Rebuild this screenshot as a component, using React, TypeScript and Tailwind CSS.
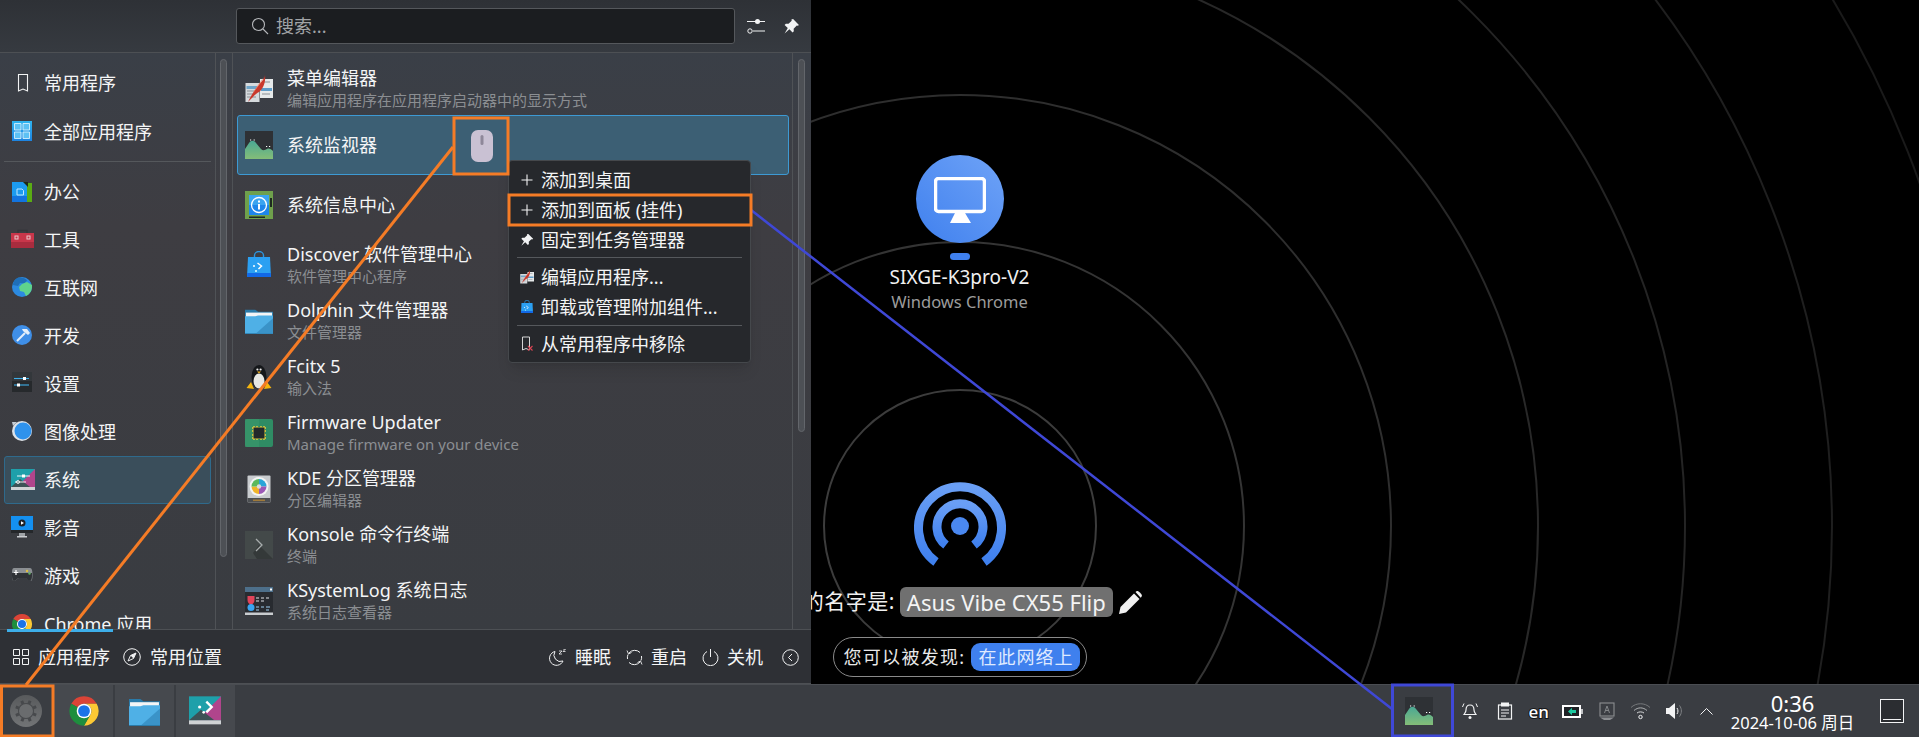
import React from "react";

type P = { s?: number };

function Chrome({ s = 24 }: P) {
  return (
    <svg width={s} height={s} viewBox="0 0 48 48">
      <path fill="#db4437" d="M24 2A22 22 0 0 1 43.05 13H24A11 11 0 0 0 14.47 18.5L4.95 13A22 22 0 0 1 24 2Z" />
      <path fill="#fcc934" d="M43.05 13A22 22 0 0 1 24 46L33.53 29.5A11 11 0 0 0 24 13Z" />
      <path fill="#1e8e3e" d="M24 46A22 22 0 0 1 4.95 13L14.47 18.5L14 29.5L24 35Z" />
      <path fill="#1e8e3e" d="M24 46L33.53 29.5L24 30Z" />
      <circle cx="24" cy="24" r="11" fill="#fff" />
      <circle cx="24" cy="24" r="8.8" fill="#1a73e8" />
    </svg>
  );
}

function Folder({ s = 28 }: P) {
  return (
    <svg width={s} height={s} viewBox="0 0 30 30">
      <path fill="#2a7aa8" d="M0 3h11l3 2h16v24H0Z" />
      <rect x="1" y="6" width="28" height="5" fill="#f4f5f6" />
      <path fill="#4fb0e6" d="M0 10h11l3-1 16 0v19H0Z" />
      <path fill="#3a93c8" d="M12 28L30 12v16Z" />
    </svg>
  );
}

function SysMon({ s = 28 }: P) {
  return (
    <svg width={s} height={s} viewBox="0 0 28 28">
      <defs>
        <linearGradient id="smg" x1="0" y1="0" x2="0" y2="1">
          <stop offset="0" stopColor="#4aa894" />
          <stop offset="1" stopColor="#84bd78" />
        </linearGradient>
      </defs>
      <rect width="28" height="28" fill="#2e3135" />
      <path fill="url(#smg)" d="M0 18L4 12C6 9 9 9 11 12L16 18C18 20 20 19 22 18C24 17 26 18 28 20V28H0Z" />
      <path fill="#fff" d="M5 8.5h1.2v1H5ZM8.6 8.5h1.2v1H8.6ZM21 15h1.2v1H21ZM24 15h1.2v1H24Z" />
    </svg>
  );
}

function MenuEdit({ s = 28 }: P) {
  return (
    <svg width={s} height={s} viewBox="0 0 28 28">
      <rect x="0.5" y="8" width="14" height="19" fill="#d6dadd" />
      <rect x="15" y="4" width="13" height="19" fill="#e6e9ea" />
      <rect x="1.5" y="11" width="12" height="3" fill="#6fa5c9" />
      <rect x="16" y="13" width="11" height="3" fill="#5e9cc9" />
      <path d="M2 16h10M2 19h7M2 22h9M17 7h8M17 19h8" stroke="#8a8f94" strokeWidth="1" />
      <path fill="#c9382c" d="M20 0C20 4 15 8 12 12C9 16 6 21 3 27C8 22 10 19 14 17C18 14 21 7 20 0Z" />
      <path fill="#ef8a70" d="M19 2C16 6 12 11 8 18C12 13 16 8 19 2Z" />
    </svg>
  );
}

function Info({ s = 28 }: P) {
  return (
    <svg width={s} height={s} viewBox="0 0 28 28">
      <rect width="28" height="28" fill="#6fa04c" />
      <rect x="4" y="4" width="20" height="20" fill="#1e86ea" />
      <path d="M4 4h20v10H4Z" fill="#3aa4f0" />
      <path d="M25 7h2v9h-2ZM4 25.5h16v1.5H4Z" fill="#1e2a20" />
      <circle cx="14" cy="14" r="7.5" fill="none" stroke="#fff" strokeWidth="1.3" />
      <rect x="13" y="13" width="2" height="5.5" fill="#fff" />
      <rect x="13" y="9.5" width="2" height="2" fill="#fff" />
    </svg>
  );
}

function Bag({ s = 28 }: P) {
  return (
    <svg width={s} height={s} viewBox="0 0 28 28">
      <path d="M9.5 7V4.5a4.5 4 0 0 1 9 0V7" fill="none" stroke="#2b95e0" strokeWidth="1.4" />
      <path fill="#2ba0f2" d="M3 6h22l1 20H2Z" />
      <path fill="#1268e6" d="M2.2 22h23.6l.2 4H2Z" />
      <path d="M12.5 12l4 3-3 3" fill="none" stroke="#fff" strokeWidth="1.5" />
      <circle cx="9" cy="15" r="1" fill="#fff" />
      <circle cx="11" cy="20" r="1" fill="#dff" />
    </svg>
  );
}

function Penguin({ s = 28 }: P) {
  return (
    <svg width={s} height={s} viewBox="0 0 28 28">
      <ellipse cx="14" cy="14" rx="7.5" ry="12" fill="#15171a" />
      <ellipse cx="14" cy="18" rx="5.5" ry="7.5" fill="#e8e8e4" />
      <circle cx="12.4" cy="6.5" r="1.1" fill="#eee" />
      <circle cx="15.6" cy="6.5" r="1.1" fill="#eee" />
      <path d="M12 8.5h4l-2 2Z" fill="#f0b020" />
      <path d="M1.5 25L6 19l3 7ZM26.5 25L22 19l-3 7Z" fill="#f5b50f" />
    </svg>
  );
}

function Firmware({ s = 28 }: P) {
  return (
    <svg width={s} height={s} viewBox="0 0 28 28">
      <rect width="28" height="28" rx="2" fill="#2f8c64" />
      <path d="M0 0h14v28H0Z" fill="#3e9a6e" opacity="0.5" />
      <path d="M7 9h14M7 12h14M7 16h14M7 19h14M9 7v14M12 7v14M16 7v14M19 7v14" stroke="#f2d13a" strokeWidth="1.4" />
      <rect x="8.5" y="8.5" width="11" height="11" fill="#23282b" />
    </svg>
  );
}

function Disk({ s = 28 }: P) {
  return (
    <svg width={s} height={s} viewBox="0 0 28 28">
      <rect x="2.5" y="0.5" width="23" height="27" rx="1" fill="#c9cccf" />
      <rect x="2.5" y="23" width="23" height="4.5" fill="#4c4f52" />
      <rect x="8" y="24.5" width="12" height="1.6" fill="#a07a3a" />
      <circle cx="14" cy="11.5" r="9.5" fill="#f4f4f4" />
      <path d="M14 11.5V4a7.5 7.5 0 0 1 7.5 7.5Z" fill="#2aa5d8" />
      <path d="M14 11.5h7.5A7.5 7.5 0 0 1 14 19Z" fill="#9b59b6" />
      <path d="M14 11.5V19a7.5 7.5 0 0 1-7.5-7.5Z" fill="#f0b429" />
      <path d="M14 11.5H6.5A7.5 7.5 0 0 1 14 4Z" fill="#5cb85c" />
      <circle cx="14" cy="11.5" r="2.2" fill="#ddd" />
    </svg>
  );
}

function Konsole({ s = 28 }: P) {
  return (
    <svg width={s} height={s} viewBox="0 0 28 28">
      <rect width="28" height="28" fill="#434949" />
      <path d="M14 14L28 28H12L8 22Z" fill="#343939" />
      <path d="M11 8l6 6-6 6" fill="none" stroke="#a8adad" strokeWidth="1.3" />
    </svg>
  );
}

function SysLog({ s = 28 }: P) {
  return (
    <svg width={s} height={s} viewBox="0 0 28 28">
      <rect width="28" height="28" fill="#282b30" />
      <rect width="28" height="5" fill="#4d6f8a" />
      <rect x="25" y="1.5" width="2" height="2" fill="#fff" />
      <rect y="25.5" width="28" height="2.5" fill="#c9cccf" />
      <path d="M2.5 9h7v4c0 3-2 4-3.500 5C4.500 17 2.500 16 2.500 13Z" fill="#e0445a" />
      <circle cx="6" cy="20.500" r="3.500" fill="#3aa4f0" />
      <path d="M11 11h3M16 11h3M21 11h3M11 14h3M16 14h3" stroke="#e0e4e8" strokeWidth="1" />
      <path d="M11 20h3M16 20h3M21 20h4M11 23h3M21 23h3" stroke="#9fd0f0" strokeWidth="1" />
    </svg>
  );
}

function Bookmark() {
  return (
    <svg width="24" height="24" viewBox="0 0 24 24">
      <path d="M7.500 3.500h9v16.500l-4.500-2-4.500 2Z" fill="none" stroke="#f2f3f4" strokeWidth="1.100" />
    </svg>
  );
}

function AllApps() {
  return (
    <svg width="24" height="24" viewBox="0 0 24 24">
      <defs>
        <linearGradient id="aa" x1="0" y1="0" x2="0" y2="1">
          <stop offset="0" stopColor="#2fb4f0" />
          <stop offset="1" stopColor="#1d83e0" />
        </linearGradient>
      </defs>
      <rect x="1" y="1" width="20" height="20" fill="url(#aa)" />
      <path d="M3.500 3.500h6.500v6.500H3.500ZM12 3.500h6.500v6.500H12ZM3.500 12h6.500v6.500H3.500ZM12 12h6.500v6.500H12Z" fill="#5cc1f4" stroke="#e6f6ff" strokeWidth="0.800" />
    </svg>
  );
}

function Office() {
  return (
    <svg width="24" height="24" viewBox="0 0 24 24">
      <rect x="1" y="2" width="15" height="20" fill="#1c9bf0" />
      <path d="M1 16h15v6H1Z" fill="#1374e0" />
      <path d="M16 3h5v19h-5Z" fill="#5aac14" />
      <path d="M12 2h5v5Z" fill="#1f2a14" />
      <path d="M6 9h5l1.500 1.500V15H6Z" fill="none" stroke="#bfe6ff" strokeWidth="1" />
    </svg>
  );
}

function Tools() {
  return (
    <svg width="24" height="24" viewBox="0 0 24 24" className="overflow-visible">
      <path d="M7 5V2.500h9V5" fill="none" stroke="#33363a" strokeWidth="1.500" />
      <rect x="0" y="5" width="23" height="15" fill="#c8364a" />
      <rect x="0" y="14" width="23" height="6" fill="#a82c3e" />
      <rect x="4" y="8" width="3" height="3" fill="none" stroke="#e8c8cc" strokeWidth="1" />
      <rect x="16" y="8" width="3" height="3" fill="none" stroke="#e8c8cc" strokeWidth="1" />
    </svg>
  );
}

function Globe() {
  return (
    <svg width="24" height="24" viewBox="0 0 24 24">
      <circle cx="11" cy="11" r="10" fill="#2c8ae0" />
      <path d="M8 1.500c4 0 7 1 8 3l-3 3-4-.5-2 3-5-1C2 5 5 2 8 1.500Z" fill="#1f6fb8" />
      <path d="M11 8l5-2 5 3c.5 5-2 9-6 11l-2-4-4-1-1-4Z" fill="#5fd38c" />
    </svg>
  );
}

function Dev() {
  return (
    <svg width="24" height="24" viewBox="0 0 24 24">
      <circle cx="11" cy="11" r="10" fill="#3f8fe8" />
      <path d="M6 17l8-8" stroke="#e4effa" strokeWidth="2" />
      <path d="M11 5h5l3 4-2 2-5-4Z" fill="#e4effa" />
    </svg>
  );
}

function Settings() {
  return (
    <svg width="24" height="24" viewBox="0 0 24 24">
      <rect x="1" y="0" width="20" height="20" fill="#26292c" />
      <path d="M1 0h20v9H1Z" fill="#33373b" />
      <path d="M3 6.500h15" stroke="#3fb0ea" strokeWidth="1.100" />
      <path d="M3 13h15" stroke="#3fb0ea" strokeWidth="1.100" />
      <rect x="12" y="5" width="3" height="3" fill="#fff" />
      <rect x="6" y="11.500" width="3" height="3" fill="#fff" />
    </svg>
  );
}

function Gfx() {
  return (
    <svg width="24" height="24" viewBox="0 0 24 24">
      <circle cx="11" cy="11" r="10" fill="#dde2e8" />
      <circle cx="12" cy="11" r="8.500" fill="#2f92ec" />
      <path d="M1 2h5L2 6Z" fill="#c4ccd4" />
    </svg>
  );
}

function SysIcon({ s = 24, slider = true }: P & { slider?: boolean }) {
  return (
    <svg width={s} height={s} viewBox="0 0 24 24">
      <rect x="0" y="1" width="24" height="18" fill="#1ea0aa" />
      <path d="M24 1v18H6Z" fill="#b0458c" />
      <path d="M0 19L9 11l10 8Z" fill="#3d5256" />
      <rect y="19" width="24" height="3" fill="#cfd2d4" />
      {slider ? (
        <g>
          <path d="M6 8h13M4 14h11" stroke="#fff" strokeWidth="0.900" />
          <rect x="11" y="6.500" width="3" height="3" fill="#fff" />
          <circle cx="7" cy="14" r="1.500" fill="none" stroke="#fff" strokeWidth="0.800" />
        </g>
      ) : (
        <g>
          <path d="M13 5l4 4-4 4" fill="none" stroke="#fff" strokeWidth="1.800" />
          <circle cx="8" cy="9" r="1.200" fill="#fff" />
          <circle cx="11" cy="13" r="1" fill="#fff" />
        </g>
      )}
    </svg>
  );
}

function Media() {
  return (
    <svg width="24" height="24" viewBox="0 0 24 24">
      <rect x="0" y="0" width="22" height="14" fill="#1490f0" />
      <rect x="0" y="14" width="22" height="3" fill="#24272a" />
      <rect x="8" y="17" width="6" height="3" fill="#9fa3a7" />
      <rect x="6" y="20" width="10" height="1.500" fill="#c9ccd0" />
      <circle cx="11" cy="7" r="3.500" fill="#1e2226" />
      <path d="M10 5.200l3 1.800-3 1.800Z" fill="#fff" />
    </svg>
  );
}

function Game() {
  return (
    <svg width="24" height="24" viewBox="0 0 24 24">
      <path d="M3 4h16c2 0 2.500 3 2.500 7s-.5 6-2 6c-2 0-3-3-5-3H8c-2 0-3 3-5 3-1.500 0-2-2-2-6s0-7 2-7Z" fill="#8b8f93" />
      <path d="M1 9h20v3c0 3-1 5-2 5-2 0-3-3-5-3H8c-2 0-3 3-5 3-1 0-2-2-2-5Z" fill="#2f3236" />
      <path d="M5 6v5M2.800 8.500h4.500" stroke="#fff" strokeWidth="1.200" />
      <circle cx="16" cy="7" r="1.200" fill="#e0c040" />
      <circle cx="18.500" cy="9.500" r="1.200" fill="#60b060" />
    </svg>
  );
}

function Mouse() {
  return (
    <svg width="22" height="32" viewBox="0 0 22 32">
      <rect width="22" height="32" rx="7" fill="#c9c1d3" />
      <rect x="9.500" y="5" width="3" height="10" rx="1.500" fill="#8e8799" />
    </svg>
  );
}

function Plus() {
  return (
    <svg width="14" height="14" viewBox="0 0 14 14">
      <path d="M7 1.500v11M1.500 7h11" stroke="#f2f3f4" strokeWidth="1.100" />
    </svg>
  );
}

function PinIcon({ s = 14 }: P) {
  return (
    <svg width={s} height={s} viewBox="0 0 16 16">
      <path d="M9.500 1l5.500 5.500-1 .8-1-.3-3 3 .2 2.500-1.200 1.200-3-3L1.500 14.500l3-5-3-3 1.200-1.200 2.500.2 3-3-.3-1Z" fill="#f2f3f4" />
    </svg>
  );
}

function KGear() {
  const teeth = [0, 45, 90, 135, 180, 225, 270, 315];
  return (
    <svg width="32" height="32" viewBox="0 0 32 32">
      <defs>
        <linearGradient id="kg" x1="0" y1="0" x2="0" y2="1">
          <stop offset="0" stopColor="#585a5c" />
          <stop offset="1" stopColor="#727476" />
        </linearGradient>
      </defs>
      <circle cx="16" cy="16" r="16" fill="url(#kg)" />
      <circle cx="16" cy="16" r="8" fill="#47494c" />
      {teeth.map((t) => (
        <rect key={t} x="14.500" y="5" width="3" height="5.500" fill="#47494c" transform={`rotate(${t + 22} 16 16)`} />
      ))}
      <circle cx="16" cy="16" r="7" fill="#6a6c6e" />
    </svg>
  );
}

function Row({ icon, title, sub, active }: { icon: React.ReactNode; title: string; sub?: string; active?: boolean }) {
  return (
    <div
      className={
        active
          ? "mr-[3px] ml-[4px] flex h-[60px] items-center rounded-[3px] border border-[#3d9ad4] bg-[#3c5f74] pl-[7px]"
          : "mr-[3px] ml-[4px] flex h-[56px] items-center border border-transparent pl-[7px]"
      }
    >
      <div className="flex h-[28px] w-[28px] shrink-0 items-center justify-center">{icon}</div>
      <div className="ml-[14px] flex flex-col">
        <div className="text-[18px] leading-[23px] whitespace-nowrap text-[#f4f5f6]">{title}</div>
        {sub ? <div className="text-[15px] leading-[21px] whitespace-nowrap text-[#8b8e92]">{sub}</div> : null}
      </div>
    </div>
  );
}

function Side({ icon, label, active }: { icon: React.ReactNode; label: string; active?: boolean }) {
  return (
    <div
      className={
        active
          ? "mx-[4px] flex h-[48px] shrink-0 items-center rounded-[3px] border border-[#2f6a8c] bg-[#3a4e5b] pl-[6px]"
          : "mx-[4px] flex h-[48px] shrink-0 items-center border border-transparent pl-[6px]"
      }
    >
      <div className="flex h-[24px] w-[24px] shrink-0 items-center">{icon}</div>
      <span className="ml-[9px] text-[18px] whitespace-nowrap text-[#f4f5f6]">{label}</span>
    </div>
  );
}

function Ctx({ icon, label }: { icon: React.ReactNode; label: string }) {
  return (
    <div className="flex h-[30px] shrink-0 items-center pl-[10px]">
      <div className="flex w-[16px] shrink-0 justify-center">{icon}</div>
      <span className="ml-[6px] text-[18px] whitespace-nowrap text-[#f4f5f6]">{label}</span>
    </div>
  );
}

function Thumb({ className }: { className: string }) {
  return <div className={"mt-[6px] w-[7px] rounded-full border border-[#63666b] bg-[#4d5055] " + className} />;
}

function Desktop() {
  const rings = [
    [136, "#3c3c3c"],
    [284, "#343434"],
    [431, "#2e2e2e"],
    [578, "#282828"],
    [725, "#242424"],
    [872, "#1f1f1f"],
    [1019, "#1a1a1a"],
  ] as const;
  return (
    <div className="relative col-start-1 row-start-1 flex flex-col items-center overflow-hidden bg-black">
      <svg className="absolute inset-0" width="1919" height="684" viewBox="0 0 1919 684">
        {rings.map(([r, c]) => (
          <circle key={r} cx="960" cy="526" r={r} fill="none" stroke={c} strokeWidth="2" />
        ))}
      </svg>
      <div className="relative mt-[155px] flex h-[88px] w-[88px] items-center justify-center rounded-full bg-linear-to-tr from-[#3f80ee] to-[#6fa3f7]">
        <svg width="52" height="46" viewBox="0 0 52 46" className="mt-[2px]">
          <rect x="1.500" y="1.500" width="49" height="33" rx="3" fill="none" stroke="#fff" strokeWidth="3.500" />
          <path d="M21 36h10l6 10H16Z" fill="#fff" />
        </svg>
      </div>
      <div className="relative mt-[10px] h-[7px] w-[20px] rounded-full bg-[#3f80ee]" />
      <div className="relative mt-[6px] text-[19px] leading-[22px] whitespace-nowrap text-[#f0f0f0]">SIXGE-K3pro-V2</div>
      <div className="relative mt-[4px] text-[16.500px] leading-[20px] whitespace-nowrap text-[#9c9c9c]">Windows Chrome</div>
      <div className="relative mt-[168px] h-[86px] w-[92px]">
        <svg width="92" height="86" viewBox="0 0 92 86">
          <defs>
            <linearGradient id="bc" x1="0" y1="0" x2="0" y2="1">
              <stop offset="0" stopColor="#6a9ff5" />
              <stop offset="1" stopColor="#3f80ee" />
            </linearGradient>
          </defs>
          <g fill="none" stroke="url(#bc)" strokeWidth="9">
            <path d="M22 82A41.500 41.500 0 1 1 70 82" />
            <path d="M32 65A23 23 0 1 1 60 65" />
          </g>
          <circle cx="46" cy="46" r="9" fill="#4a88f0" />
        </svg>
      </div>
      <div className="relative mt-[21px] ml-[4px] flex h-[30px] items-center">
        <span className="mr-[5px] text-[21px] tracking-[0.500px] whitespace-nowrap text-[#f0f0f0]">你的名字是:</span>
        <span className="flex h-[30px] items-center rounded-[6px] bg-[#707070] px-[7px] text-[22px] whitespace-nowrap text-[#f4f4f4]">
          Asus Vibe CX55 Flip
        </span>
        <svg width="23" height="23" viewBox="0 0 23 23" className="ml-[6px]">
          <path d="M0 23l1.500-7L15 2.500 20.500 8 7 21.500Z" fill="#f0f0f0" />
          <path d="M16.500 1l1-.8c1-.5 1.800-.2 3 1l1.500 1.500c1 1 1.200 2 .5 3l-.8 1Z" fill="#f0f0f0" />
        </svg>
      </div>
      <div className="relative mt-[20px] flex h-[40px] w-[254px] items-center rounded-full border border-[#8a8a8a] bg-black pl-[10px]">
        <span className="text-[18px] tracking-[1.300px] whitespace-nowrap text-[#e8e8e8]">您可以被发现:</span>
        <span className="ml-[6px] flex h-[28px] w-[109px] items-center justify-center rounded-[9px] bg-[#3f80ee] text-[18px] tracking-[1px] whitespace-nowrap text-[#dfeaff]">
          在此网络上
        </span>
      </div>
    </div>
  );
}

function Menu() {
  return (
    <div className="relative col-start-1 row-start-1 flex h-[684px] w-[811px] flex-col bg-[#3a3d42]">
      <div className="flex h-[53px] shrink-0 items-center border-b border-[#4d5054] bg-linear-to-b from-[#2e3136] to-[#363a40] pl-[236px]">
        <div className="flex h-[36px] w-[499px] items-center rounded-[3px] border border-[#55585c] bg-[#1b1d20] pl-[14px]">
          <svg width="18" height="18" viewBox="0 0 18 18">
            <circle cx="7.500" cy="7.500" r="6" fill="none" stroke="#b5b7ba" strokeWidth="1.100" />
            <path d="M12 12l5 5" stroke="#b5b7ba" strokeWidth="1.100" />
          </svg>
          <span className="ml-[7px] text-[18px] text-[#a2a4a7]">搜索...</span>
        </div>
        <svg width="18" height="18" viewBox="0 0 18 18" className="ml-[12px]">
          <path d="M0 4.500h18M6 14h12" stroke="#f2f3f4" strokeWidth="1.100" />
          <rect x="8" y="2" width="5" height="5" rx="2.500" fill="#f2f3f4" />
          <circle cx="3" cy="14" r="2.200" fill="#33363b" stroke="#f2f3f4" strokeWidth="1" />
        </svg>
        <div className="ml-[18px]">
          <PinIcon s={17} />
        </div>
      </div>
      <div className="flex h-[576px] shrink-0 bg-linear-to-b from-[#3a3f47] via-[#3e3d42] via-30% to-[#393c41]">
        <div className="flex h-full w-[216px] shrink-0 flex-col overflow-hidden border-r border-[#4f5256] pt-[6px]">
          <Side icon={<Bookmark />} label="常用程序" />
          <div className="mt-[1px]">
            <Side icon={<AllApps />} label="全部应用程序" />
          </div>
          <div className="mx-[4px] mt-[5px] mb-[6px] h-px shrink-0 bg-[#55585c]" />
          <Side icon={<Office />} label="办公" />
          <Side icon={<Tools />} label="工具" />
          <Side icon={<Globe />} label="互联网" />
          <Side icon={<Dev />} label="开发" />
          <Side icon={<Settings />} label="设置" />
          <Side icon={<Gfx />} label="图像处理" />
          <Side icon={<SysIcon />} label="系统" active />
          <Side icon={<Media />} label="影音" />
          <Side icon={<Game />} label="游戏" />
          <Side icon={<Chrome s={22} />} label="Chrome 应用" />
        </div>
        <div className="flex h-full w-[17px] shrink-0 justify-center border-r border-[#4f5256] pr-px">
          <Thumb className="h-[498px]" />
        </div>
        <div className="flex h-full w-[560px] shrink-0 flex-col overflow-hidden border-r border-[#4f5256] pt-[8px]">
          <Row icon={<MenuEdit />} title="菜单编辑器" sub="编辑应用程序在应用程序启动器中的显示方式" />
          <div className="-mt-[2px]">
            <Row icon={<SysMon />} title="系统监视器" active />
          </div>
          <div className="[&>div]:h-[60px]">
            <Row icon={<Info />} title="系统信息中心" />
          </div>
          <div className="mt-[2px]">
            <Row icon={<Bag />} title="Discover 软件管理中心" sub="软件管理中心程序" />
          </div>
          <Row icon={<Folder />} title="Dolphin 文件管理器" sub="文件管理器" />
          <Row icon={<Penguin />} title="Fcitx 5" sub="输入法" />
          <Row icon={<Firmware />} title="Firmware Updater" sub="Manage firmware on your device" />
          <Row icon={<Disk />} title="KDE 分区管理器" sub="分区编辑器" />
          <Row icon={<Konsole />} title="Konsole 命令行终端" sub="终端" />
          <Row icon={<SysLog />} title="KSystemLog 系统日志" sub="系统日志查看器" />
        </div>
        <div className="flex h-full flex-1 justify-center pr-[1px]">
          <Thumb className="h-[373px]" />
        </div>
      </div>
      <div className="relative flex h-[55px] shrink-0 items-center border-t border-b border-[#4d5054] bg-[#2e3035] pt-[1px] pl-[13px] text-[18px] whitespace-nowrap text-[#f4f5f6]">
        <div className="absolute -top-[1px] left-[7px] h-[3px] w-[106px] bg-[#3daee9]" />
        <svg width="16" height="16" viewBox="0 0 16 16">
          <path d="M.5.500h6v6h-6ZM9.500.500h6v6h-6ZM.5 9.500h6v6h-6ZM9.500 9.500h6v6h-6Z" fill="none" stroke="#f2f3f4" />
        </svg>
        <span className="ml-[9px]">应用程序</span>
        <svg width="18" height="18" viewBox="0 0 18 18" className="ml-[13px]">
          <circle cx="9" cy="9" r="8.300" fill="none" stroke="#f2f3f4" strokeWidth="1" />
          <path d="M13 5L7.500 7.500 5 13l5.500-2.500Z" fill="none" stroke="#f2f3f4" strokeWidth="1" />
          <path d="M13 5L7.500 7.500l3 3Z" fill="#f2f3f4" />
        </svg>
        <span className="ml-[9px]">常用位置</span>
        <svg width="17" height="17" viewBox="0 0 17 17" className="ml-[327px]">
          <path d="M6 2.500A7 7 0 1 0 14 12 6.500 6.500 0 0 1 6 2.500Z" fill="none" stroke="#f2f3f4" strokeWidth="1" />
          <path d="M10 2h3l-3 3h3M14 0h2.500L14 2.500h2.500" fill="none" stroke="#f2f3f4" strokeWidth="0.800" />
        </svg>
        <span className="ml-[9px]">睡眠</span>
        <svg width="17" height="17" viewBox="0 0 17 17" className="ml-[15px]">
          <path d="M3 4A7.500 7.500 0 0 1 14 3.500M14 13A7.500 7.500 0 0 1 3 13.500M1.500 10A7.500 7.500 0 0 1 2 5.500M15.500 7A7.500 7.500 0 0 1 15 11.500" fill="none" stroke="#f2f3f4" strokeWidth="1" />
          <path d="M1 1.500l1.500 3.500 3-1.500M16 15.500l-1.500-3.500-3 1.500" fill="none" stroke="#f2f3f4" strokeWidth="0.900" />
        </svg>
        <span className="ml-[8px]">重启</span>
        <svg width="17" height="17" viewBox="0 0 17 17" className="ml-[15px]">
          <path d="M5 2.500a7.500 7.500 0 1 0 7 0" fill="none" stroke="#f2f3f4" strokeWidth="1" />
          <path d="M8.500 0v8" stroke="#f2f3f4" strokeWidth="1" />
        </svg>
        <span className="ml-[8px]">关机</span>
        <svg width="17" height="17" viewBox="0 0 17 17" className="ml-[19px]">
          <circle cx="8.500" cy="8.500" r="7.800" fill="none" stroke="#f2f3f4" strokeWidth="1" />
          <path d="M10 5L6.500 8.500 10 12" fill="none" stroke="#f2f3f4" strokeWidth="1" />
        </svg>
      </div>
      <div className="absolute top-[160px] left-[508px] flex h-[203px] w-[243px] flex-col rounded-[4px] border border-[#45484c] bg-[#26282c] pt-[4px] shadow-lg">
        <Ctx icon={<Plus />} label="添加到桌面" />
        <Ctx icon={<Plus />} label="添加到面板 (挂件)" />
        <Ctx icon={<PinIcon />} label="固定到任务管理器" />
        <div className="mx-[8px] mt-[2px] mb-[4px] h-px shrink-0 bg-[#55585c]" />
        <Ctx icon={<MenuEdit s={14} />} label="编辑应用程序..." />
        <Ctx icon={<Bag s={14} />} label="卸载或管理附加组件..." />
        <div className="mx-[8px] mt-[3px] mb-[3px] h-px shrink-0 bg-[#55585c]" />
        <Ctx
          icon={
            <svg width="14" height="16" viewBox="0 0 14 16">
              <path d="M2.500 1h7v13l-3.500-1.500L2.500 14Z" fill="none" stroke="#e8e8e8" strokeWidth="0.900" />
              <path d="M8 10l4.500 4.500M12.500 10L8 14.500" stroke="#da4453" strokeWidth="1.100" />
            </svg>
          }
          label="从常用程序中移除"
        />
      </div>
      <div className="absolute top-[130px] left-[471px]">
        <Mouse />
      </div>
    </div>
  );
}

function Taskbar() {
  const tile = "flex h-full w-[59px] items-center justify-center bg-[#46494e]";
  return (
    <div className="flex h-[53px] items-center border-t border-[#4a4d52] bg-[#3a3d42] text-white">
      <div className="flex h-full w-[54px] items-center justify-center pr-[2px]">
        <KGear />
      </div>
      <div className={tile}>
        <Chrome s={32} />
      </div>
      <div className={"ml-[2px] " + tile}>
        <Folder s={31} />
      </div>
      <div className={"ml-[2px] pr-[2px] " + tile}>
        <SysIcon s={32} slider={false} />
      </div>
      <div className="flex-1" />
      <div className="mr-[28px]">
        <SysMon />
      </div>
      <svg width="18" height="18" viewBox="0 0 18 18">
        <path d="M9 3c3 0 4 2 4 5 0 2 1 3 2 4.500H3C4 11 5 10 5 8c0-3 1-5 4-5Z" fill="none" stroke="#f2f3f4" strokeWidth="1.200" />
        <circle cx="9" cy="15.500" r="1.500" fill="#f2f3f4" />
        <path d="M1.500 5L3 1.500M16.500 5L15 1.500" stroke="#f2f3f4" strokeWidth="1" />
      </svg>
      <svg width="16" height="18" viewBox="0 0 16 18" className="ml-[18px]">
        <rect x="1.500" y="3" width="13" height="14" fill="none" stroke="#f2f3f4" strokeWidth="1.200" />
        <rect x="4" y="0.500" width="8" height="4" fill="#f2f3f4" />
        <path d="M4 8h8M4 11h8M4 14h5" stroke="#f2f3f4" strokeWidth="1" />
      </svg>
      <span className="ml-[16px] text-[17px] leading-none font-medium [paint-order:stroke] [-webkit-text-stroke:2px_#15171a]">en</span>
      <svg width="21" height="13" viewBox="0 0 21 13" className="ml-[13px]">
        <rect width="19" height="13" fill="#fff" />
        <rect x="2" y="2" width="15" height="9" fill="#1f2226" />
        <rect x="19" y="4" width="2" height="5" fill="#c0c2c4" />
        <path d="M6 6.500L10 2.800V5H14V8H10V10.200Z" fill="#1cc9a0" />
      </svg>
      <svg width="16" height="19" viewBox="0 0 16 19" className="ml-[16px]">
        <rect x="1" y="1" width="14" height="13" fill="none" stroke="#8b8e91" strokeWidth="1.100" />
        <path d="M5.500 11L8 4l2.500 7M6.500 8.500h3" fill="none" stroke="#8b8e91" strokeWidth="0.900" />
        <path d="M1 15.500h14L11 18H5Z" fill="#8b8e91" />
      </svg>
      <svg width="21" height="18" viewBox="0 0 21 18" className="ml-[15px]">
        <path d="M1 5.500C6 .5 15 .5 20 5.500" fill="none" stroke="#75787b" strokeWidth="1" />
        <path d="M4 8.500c4-3.500 9-3.500 13 0" fill="none" stroke="#b0b3b5" strokeWidth="1" />
        <path d="M7 11c2-1.500 5-1.500 7 0" fill="none" stroke="#d8d9da" strokeWidth="1" />
        <circle cx="10.500" cy="15" r="1.700" fill="none" stroke="#f2f3f4" strokeWidth="1" />
      </svg>
      <svg width="17" height="18" viewBox="0 0 17 18" className="ml-[15px]">
        <path d="M0 6h3l6-5v16l-6-5H0Z" fill="#f2f3f4" />
        <path d="M11 6c1.300 2 1.300 4 0 6" fill="none" stroke="#f2f3f4" strokeWidth="1" />
        <path d="M13.500 3.500c2.500 3.500 2.500 7.500 0 11" fill="none" stroke="#7f8285" strokeWidth="1" />
      </svg>
      <svg width="13" height="8" viewBox="0 0 13 8" className="ml-[17px]">
        <path d="M.5 7.500l6-6 6 6" fill="none" stroke="#f2f3f4" strokeWidth="1" />
      </svg>
      <div className="ml-[17px] flex w-[125px] flex-col items-center whitespace-nowrap">
        <span className="text-[22px] leading-[22px]">0:36</span>
        <span className="text-[16.500px] leading-[17px]">2024-10-06 周日</span>
      </div>
      <div className="mr-[15px] ml-[25px] flex h-[24px] w-[24px] flex-col justify-end border border-[#f2f3f4] bg-[#2b2d31] px-[2px] pb-[2px]">
        <div className="h-px bg-[#f2f3f4]" />
      </div>
    </div>
  );
}

export default function App() {
  return (
    <div className="relative flex h-[737px] w-[1919px] flex-col overflow-hidden bg-black font-['Noto_Sans','Noto_Sans_CJK_SC',sans-serif]">
      <div className="grid h-[684px] shrink-0 grid-cols-1 grid-rows-1">
        <Desktop />
        <Menu />
      </div>
      <Taskbar />
      <svg className="pointer-events-none absolute inset-0" width="1919" height="737" viewBox="0 0 1919 737">
        <path d="M26 685L453 147" stroke="#f57c26" strokeWidth="3" />
        <path d="M751 210L1392 709" stroke="#3f48d6" strokeWidth="2.500" />
        <rect x="1.500" y="686" width="51.500" height="50" fill="none" stroke="#f57c26" strokeWidth="3" />
        <rect x="454" y="118" width="54" height="56" fill="none" stroke="#f57c26" strokeWidth="3" />
        <rect x="509" y="195" width="242" height="30" fill="none" stroke="#f57c26" strokeWidth="3" />
        <rect x="1392.500" y="685" width="60" height="51" fill="none" stroke="#3f48d6" strokeWidth="3" />
      </svg>
    </div>
  );
}
